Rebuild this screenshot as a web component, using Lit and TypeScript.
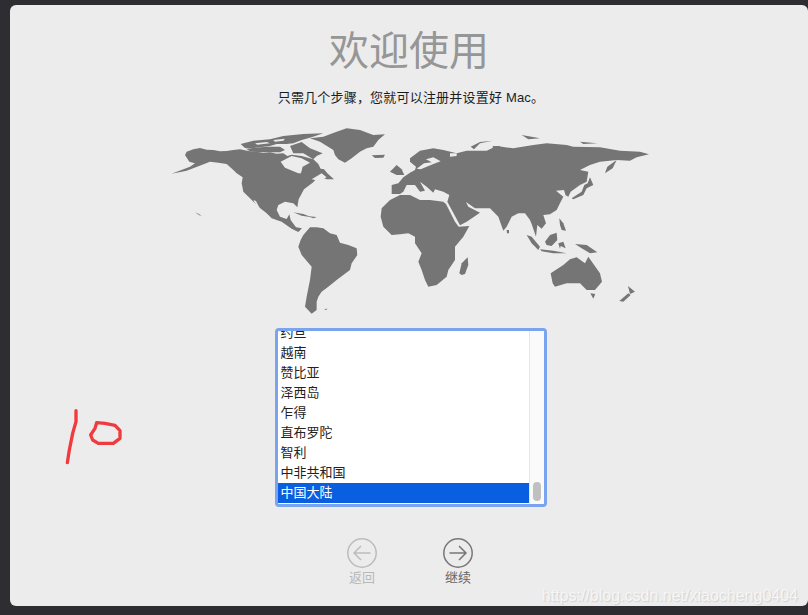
import { LitElement, html, css, svg } from 'lit';
import { customElement } from 'lit/decorators.js';

const countries = ['约旦', '越南', '赞比亚', '泽西岛', '乍得', '直布罗陀', '智利', '中非共和国', '中国大陆'];

// west half, traced in 3x coordinates of the crop at (170,120)
const westLand = [
  'M50,95 L70,88 L90,84 L110,89 L130,90 L150,94 L170,93 L190,90 L210,88 L235,93 L260,95 L280,99 L300,97 L320,101 L340,100 L352,108 L365,104 L395,108 L430,118 L445,132 L452,146 L462,148 L472,160 L492,178 L470,178 L448,168 L428,188 L402,208 L386,238 L382,262 L370,250 L345,245 L325,255 L320,270 L330,290 L350,297 L358,283 L362,300 L378,322 L396,325 L385,336 L365,326 L335,305 L305,295 L290,280 L265,260 L240,235 L220,215 L215,190 L218,172 L200,160 L190,150 L170,132 L145,128 L120,125 L95,135 L50,152 L5,161 L60,140 L75,130 L58,125 L45,105 Z',
  'M385,380 L392,360 L400,345 L420,322 L440,322 L460,325 L480,340 L500,345 L510,368 L535,375 L560,385 L562,405 L545,430 L540,450 L520,465 L500,480 L475,500 L455,515 L445,530 L440,545 L440,570 L425,581 L405,560 L410,530 L420,480 L425,440 L395,405 Z',
  'M420,55 L460,50 L500,35 L530,25 L570,30 L610,45 L645,43 L625,60 L610,80 L590,85 L570,95 L545,115 L525,128 L505,118 L495,105 L490,90 L450,65 Z',
  'M605,106 L645,104 L640,113 L615,114 Z',
  'M660,155 L680,135 L695,148 L703,165 L680,165 Z',
  'M212,72 L250,62 L300,58 L340,48 L400,42 L460,40 L425,52 L395,60 L370,70 L350,72 L320,72 L300,78 L250,84 L225,84 Z',
  'M228,86 L290,80 L330,80 L345,90 L330,97 L270,97 L240,94 Z',
  'M360,78 L395,66 L420,85 L458,100 L440,108 L430,118 L400,100 L370,100 Z',
  'M370,277 L400,282 L425,292 L395,287 Z',
  'M415,289 L440,291 L430,295 Z',
  'M75,277 L85,281 L95,287 L88,286 Z',
  'M462,567 L473,566 L468,570 Z',
];

const westWater = [
  'M332,125 L365,108 L395,115 L420,128 L398,140 L393,160 L385,160 L345,143 Z',
  'M250,240 L258,243 L272,270 L265,268 Z',
  'M425,178 L455,160 L470,172 L445,182 Z',
  'M255,70 L290,66 L300,70 L262,74 Z',
  'M310,60 L345,56 L340,62 L315,65 Z',
];

// east half, traced in 3x coordinates of the crop at (400,120)
const eastLand = [
  'M-25,222 L-25,195 L-5,190 L10,172 L30,158 L45,150 L48,140 L30,125 L30,115 L60,92 L100,85 L130,90 L170,100 L200,92 L260,92 L290,78 L340,85 L400,75 L440,70 L500,75 L520,80 L600,82 L660,92 L720,95 L747,103 L710,112 L690,122 L650,120 L600,125 L570,135 L540,150 L565,155 L560,185 L540,195 L512,215 L505,230 L497,226 L492,210 L468,212 L490,230 L480,250 L470,270 L450,283 L430,285 L438,310 L425,326 L412,315 L408,350 L395,312 L390,300 L375,280 L355,280 L335,290 L320,320 L310,332 L295,290 L270,265 L240,265 L225,265 L198,246 L205,260 L240,278 L200,305 L180,316 L142,245 L148,225 L130,215 L105,208 L100,218 L80,200 L60,185 L75,212 L60,215 L45,195 L20,195 L10,215 L0,222 Z',
  'M-58,290 L-55,265 L-30,240 L0,225 L30,225 L60,240 L90,240 L130,245 L138,252 L165,305 L176,320 L208,318 L190,350 L165,380 L165,420 L145,450 L140,470 L110,495 L85,500 L75,480 L65,450 L55,425 L65,400 L45,370 L45,350 L25,340 L0,343 L-25,345 L-50,320 Z',
  'M178,460 L185,430 L203,412 L205,435 L195,462 L185,465 Z',
  'M320,330 L327,330 L327,340 L321,340 Z',
  'M515,235 L545,215 L553,195 L563,190 L570,172 L580,195 L560,205 L550,225 L520,238 Z',
  'M380,345 L395,350 L420,380 L415,390 L395,370 Z',
  'M420,388 L460,392 L500,400 L460,400 L425,394 Z',
  'M435,365 L450,345 L470,338 L472,360 L455,378 L440,375 Z',
  'M475,370 L490,365 L497,385 L482,378 L480,386 Z',
  'M525,372 L560,375 L592,397 L570,400 L545,385 Z',
  'M478,295 L490,310 L498,332 L485,330 L480,315 Z',
  'M452,460 L490,435 L510,418 L530,412 L555,430 L565,410 L600,460 L606,485 L585,510 L560,510 L540,490 L500,490 L465,500 L458,490 Z',
  'M571,520 L586,522 L580,536 Z',
  'M658,543 L685,520 L692,525 L670,545 Z',
  'M684,498 L705,515 L690,522 Z',
  'M212,80 L240,66 L278,62 L240,70 L222,88 Z',
  'M365,45 L420,55 L385,58 Z',
  'M540,65 L592,70 L550,72 Z',
  'M278,78 L300,78 L295,100 L280,95 Z',
  'M615,160 L622,140 L650,120 L638,145 Z',
];

const eastWater = [
  'M50,146 L72,130 L95,127 L78,118 L100,112 L122,124 L100,132 L62,148 Z',
  'M150,100 L170,100 L170,108 L150,110 Z',
];

@customElement('app-root')
export class AppRoot extends LitElement {
  static styles = css`
    :host {
      display: block;
      position: relative;
      width: 808px;
      height: 615px;
      overflow: hidden;
      background: #2e2e32;
      font-family: 'Liberation Sans', 'Noto Sans CJK SC', sans-serif;
    }

    .window {
      box-sizing: border-box;
      margin: 5px 0 0 10px;
      width: 798px;
      height: 601px;
      border-radius: 6px;
      background: #ececec;
      display: flex;
      flex-direction: column;
      align-items: center;
      padding-top: 17px;
    }

    h1 {
      margin: 0;
      font-size: 40px;
      line-height: 52px;
      font-weight: 400;
      color: #969696;
      font-family: 'Noto Sans CJK SC', sans-serif;
    }

    .lead {
      margin: 14px 0 0 4px;
      font-size: 13px;
      line-height: 20px;
      letter-spacing: 0.2px;
      color: #1c1c1c;
    }

    .map {
      display: block;
      margin-top: 12px;
      width: 490px;
      height: 200px;
      filter: blur(0.35px);
    }

    .land {
      fill: #757575;
    }

    .water {
      fill: #ececec;
    }

    .picker {
      box-sizing: border-box;
      margin: 8px 0 0 3px;
      width: 272px;
      height: 179px;
      border: 3px solid #7ba4ee;
      border-radius: 4px;
      display: flex;
      background: #fff;
    }

    .rows {
      flex: 1;
      min-width: 0;
      overflow: hidden;
      display: flex;
      flex-direction: column;
      justify-content: flex-end;
      padding-bottom: 1px;
    }

    .row {
      flex: none;
      height: 20px;
      line-height: 20px;
      padding-left: 3px;
      font-size: 13px;
      color: #222;
    }

    .row.selected {
      background: #0a5fe0;
      color: #fff;
    }

    .track {
      flex: none;
      box-sizing: border-box;
      width: 15px;
      background: #fafafa;
      border-left: 1px solid #e6e6e6;
      display: flex;
      flex-direction: column;
      justify-content: flex-end;
      align-items: center;
      padding-bottom: 3px;
    }

    .thumb {
      width: 8px;
      height: 19px;
      border-radius: 4px;
      background: #c0c0c0;
    }

    .nav {
      display: flex;
      gap: 66px;
      margin: 31px 0 0 2px;
    }

    .nav-btn {
      display: flex;
      flex-direction: column;
      align-items: center;
      width: 30px;
      font-size: 13px;
      line-height: 18px;
      color: #666;
    }

    .nav-btn.off {
      color: #b8b8b8;
    }

    .nav-btn svg {
      display: block;
      width: 30px;
      height: 30px;
      margin-bottom: 1px;
      fill: none;
      stroke: #777;
      stroke-width: 1.5;
    }

    .nav-btn.off svg {
      stroke: #bcbcbc;
    }

    .scrawl {
      position: absolute;
      left: 50px;
      top: 400px;
      width: 90px;
      height: 75px;
      fill: none;
      stroke: #f03a3e;
      stroke-width: 10;
      stroke-linecap: round;
      stroke-linejoin: round;
    }

    .watermark {
      position: absolute;
      right: 10px;
      top: 586px;
      font-size: 16px;
      line-height: 20px;
      color: #f6f6f6;
      text-shadow: 1px 1px 1px #cfcfcf;
    }
  `;

  renderMap() {
    return html`
      <svg class="map" viewBox="164 120 490 200" aria-hidden="true">
        <g transform="translate(170 120) scale(0.3333)">
          ${westLand.map((d) => svg`<path class="land" d=${d} />`)}
          ${westWater.map((d) => svg`<path class="water" d=${d} />`)}
        </g>
        <g transform="translate(400 120) scale(0.3333)">
          ${eastLand.map((d) => svg`<path class="land" d=${d} />`)}
          ${eastWater.map((d) => svg`<path class="water" d=${d} />`)}
        </g>
      </svg>
    `;
  }

  render() {
    return html`
      <div class="window">
        <h1>欢迎使用</h1>
        <p class="lead">只需几个步骤，您就可以注册并设置好 Mac。</p>
        ${this.renderMap()}
        <div class="picker">
          <div class="rows">
            ${countries.map(
              (name, i) =>
                html`<div class="row ${i === countries.length - 1 ? 'selected' : ''}">${name}</div>`
            )}
          </div>
          <div class="track"><div class="thumb"></div></div>
        </div>
        <div class="nav">
          <div class="nav-btn off">
            <svg viewBox="0 0 30 30">
              <circle cx="15" cy="15" r="14.2" />
              <path d="M23.5 15H7M14 8l-7 7 7 7" />
            </svg>
            返回
          </div>
          <div class="nav-btn">
            <svg viewBox="0 0 30 30">
              <circle cx="15" cy="15" r="14.2" />
              <path d="M6.5 15H23M16 8l7 7-7 7" />
            </svg>
            继续
          </div>
        </div>
      </div>
      <svg class="scrawl" viewBox="0 0 270 225" aria-hidden="true">
        <path d="M78,32 L78,65 L68,100 L58,150 L52,188" />
        <path d="M140,68 L165,70 L195,76 L210,92 L210,115 L190,130 L145,130 L128,120 L122,105 L135,85 Z" />
      </svg>
      <div class="watermark">https://blog.csdn.net/xiaocheng0404</div>
    `;
  }
}
